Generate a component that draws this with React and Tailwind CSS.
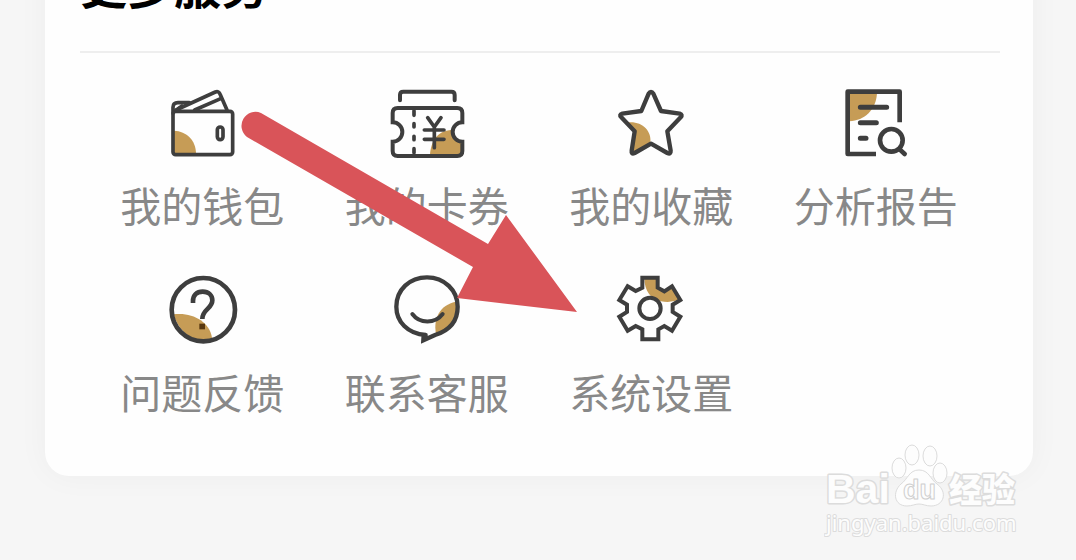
import React from "react";

const INK = "#3e3e3e";
const GOLD = "#c69c56";

const Icon = ({ viewBox = "36 42 240 240", children }) => (
	<svg
		viewBox={viewBox}
		className="w-20 h-20"
		fill="none"
		stroke={INK}
		strokeWidth="13"
		strokeLinecap="round"
		strokeLinejoin="round"
		aria-hidden="true"
	>
		{children}
	</svg>
);

const WalletIcon = () => (
	<Icon>
		<path d="M72 182 C110 184 138 210 138 252 H72 Z" fill={GOLD} stroke="none" />
		<g strokeWidth="11">
			<rect x="69" y="124" width="179" height="130" rx="8" />
			<path d="M69 130 V112 Q69 98 84 98 H118" />
			<path d="M78 120 L196 66 Q206 62 210 72 L231 120" />
			<path d="M84 114 L96 106" strokeWidth="7" />
			<path d="M134 120 L212 86" />
			<rect x="202" y="171" width="17" height="38" rx="8.5" />
		</g>
	</Icon>
);

const CouponIcon = () => (
	<Icon>
		<path d="M165 256 C168 215 185 182 230 180 L238 205 L262 212 V258 Z" fill={GOLD} stroke="none" />
		<g strokeWidth="12">
			<path d="M75 91 V75 Q75 65 85 65 H229 Q239 65 239 75 V91" />
			<path
				d="M68 114 H247 Q262 114 262 129 V157 A29 29 0 0 0 262 215 V243 Q262 258 247 258 H68 Q53 258 53 243 V215 A29 29 0 0 0 53 157 V129 Q53 114 68 114 Z"
				strokeLinejoin="miter"
			/>
			<path d="M117 122 V136 M117 161 V171 M117 199 V209 M117 236 V248" strokeWidth="11" />
			<path d="M158 143 L178 171 L198 143 M178 171 V233 M148 180 H207 M148 208 H207" strokeWidth="11" />
		</g>
	</Icon>
);

const StarIcon = () => (
	<Icon viewBox="34 42 240 240">
		<path d="M84 157 C125 152 158 180 152 221 L100 248 L106 184 Z" fill={GOLD} stroke="none" />
		<path
			d="M154 66 Q150 66 147 71 L125 123 L68 131 Q57 134 65 142 L105 184 L96 242 Q94 254 105 249 L154 221 L203 249 Q214 254 213 242 L203 184 L243 142 Q250 134 240 131 L184 123 L161 71 Q158 66 154 66 Z"
			strokeWidth="13"
		/>
	</Icon>
);

const ReportIcon = () => (
	<Icon viewBox="34 42 240 240">
		<path d="M74 154 C120 152 154 120 157 70 H74 Z" fill={GOLD} stroke="none" />
		<path d="M154 252 H69 V65 H225 V157" strokeLinecap="butt" strokeWidth="14" />
		<path d="M107 112 H186 M107 158 H155 M107 205 H124" strokeWidth="15" />
		<circle cx="200" cy="211" r="34" strokeWidth="14" />
		<path d="M225 238 L240 252" strokeWidth="14" />
	</Icon>
);

const FeedbackIcon = () => (
	<Icon viewBox="36 48 240 240">
		<path d="M70 178 C125 170 178 198 186 248 Q172 257 150 256 Q92 244 70 178 Z" fill={GOLD} stroke="none" />
		<circle cx="160" cy="164" r="95" strokeWidth="14" />
		<path d="M129 144 V138 C129 120 140 110 158 110 C176 110 187 121 187 136 C187 162 157 162 157 192" strokeLinecap="butt" strokeWidth="14" />
		<rect x="148" y="206" width="17" height="17" fill="#57370f" stroke="none" />
	</Icon>
);

const ServiceIcon = () => (
	<Icon viewBox="36 48 240 240">
		<path d="M183 236 C174 190 195 150 242 140 Q256 192 214 222 Z" fill={GOLD} stroke="none" />
		<path
			d="M152 240 C98 236 64 200 64 155 C64 104 104 67 156 67 C208 67 248 106 248 155 C248 196 224 226 180 240 L145 256 L146 240"
			strokeLinejoin="miter"
			strokeWidth="13"
		/>
		<path d="M112 177 C134 207 180 207 203 177" strokeWidth="12" />
	</Icon>
);

const SettingsIcon = () => (
	<Icon viewBox="34 48 240 240">
		<path d="M134 68 H176 V97 L194 108 L218 94 L241 133 Q214 145 184 139 C154 132 134 108 134 68 Z" fill={GOLD} stroke="none" />
		<path
			d="M128 68 H174 V98 L194 109 L217 94 L242 135 L219 149 V171 L242 185 L217 227 L194 213 L176 223 V253 H128 V223 L108 213 L84 227 L59 185 L82 171 V149 L59 135 L84 94 L108 108 L128 98 Z"
			strokeLinejoin="miter"
			strokeWidth="12"
		/>
		<circle cx="151" cy="160" r="32" strokeWidth="12" />
	</Icon>
);

const services = [
	{ label: "我的钱包", icon: WalletIcon },
	{ label: "我的卡券", icon: CouponIcon },
	{ label: "我的收藏", icon: StarIcon },
	{ label: "分析报告", icon: ReportIcon },
	{ label: "问题反馈", icon: FeedbackIcon },
	{ label: "联系客服", icon: ServiceIcon },
	{ label: "系统设置", icon: SettingsIcon },
];

const Arrow = () => (
	<svg
		className="absolute left-[240px] top-[110px] w-[338px] h-[204px] pointer-events-none"
		viewBox="240 110 338 204"
		fill="#d95459"
		aria-hidden="true"
	>
		<path d="M261 113 L488 244 L506 215 L577 312 L457 298 L473 267 L247 137 A14 14 0 0 1 261 113 Z" />
	</svg>
);

const Watermark = () => (
	<svg
		className="absolute right-14 bottom-5 w-[196px] h-[96px] pointer-events-none"
		viewBox="824 444 196 96"
		fill="#fdfdfd"
		stroke="#dcdcdc"
		strokeWidth="1"
		strokeLinejoin="round"
		role="img"
		aria-label="Baidu 经验"
	>
		<g strokeWidth="3" className="[paint-order:stroke]">
			<text x="826" y="503" className="font-['Liberation_Sans',sans-serif] text-[41px] font-bold">Bai</text>
			<text x="949" y="502" className="font-['Noto_Sans_CJK_SC',sans-serif] text-[33px] font-black">经验</text>
		</g>
		<ellipse cx="899" cy="468" rx="7" ry="10" />
		<ellipse cx="912" cy="455" rx="7" ry="10" />
		<ellipse cx="930" cy="456" rx="7" ry="10" />
		<ellipse cx="940" cy="473" rx="7" ry="10" />
		<path d="M919 470 C929 470 930 479 937 484 C948 492 944 506 931 506 C926 506 923 504 919 504 C915 504 912 506 907 506 C894 506 892 492 901 484 C908 479 909 470 919 470 Z" />
		<text x="903" y="499" stroke="#cfcfcf" className="font-['Liberation_Sans',sans-serif] text-[27px] font-bold">du</text>
		<text x="826" y="531" strokeWidth="2" className="font-['Noto_Sans',sans-serif] text-[22px] [paint-order:stroke]">
			jingyan.baidu.com
		</text>
	</svg>
);

export default function App() {
	return (
		<main className="relative min-h-screen overflow-hidden bg-[#f6f6f6] font-['Noto_Sans_CJK_SC',sans-serif]">
			<section className="-mt-10 ml-[45px] mr-[43px] pl-[35px] pr-[33px] pb-[61px] rounded-b-3xl bg-[#fefefe] shadow-[0_0_32px_rgba(0,0,0,0.04)]">
				<h2 className="pb-[43px] border-b-2 border-[#eeeeee] text-[47px] leading-[48px] font-bold text-black">
					更多服务
				</h2>
				<div className="grid grid-cols-4 gap-y-[43px] pt-[31px] pl-2.5 pr-3">
					{services.map(({ label, icon: ServiceGlyph }) => (
						<button key={label} type="button" className="flex flex-col items-center gap-4">
							<ServiceGlyph />
							<span className="text-[41px] leading-[48px] font-normal text-[#888888] whitespace-nowrap">
								{label}
							</span>
						</button>
					))}
				</div>
			</section>
			<Arrow />
			<Watermark />
		</main>
	);
}
